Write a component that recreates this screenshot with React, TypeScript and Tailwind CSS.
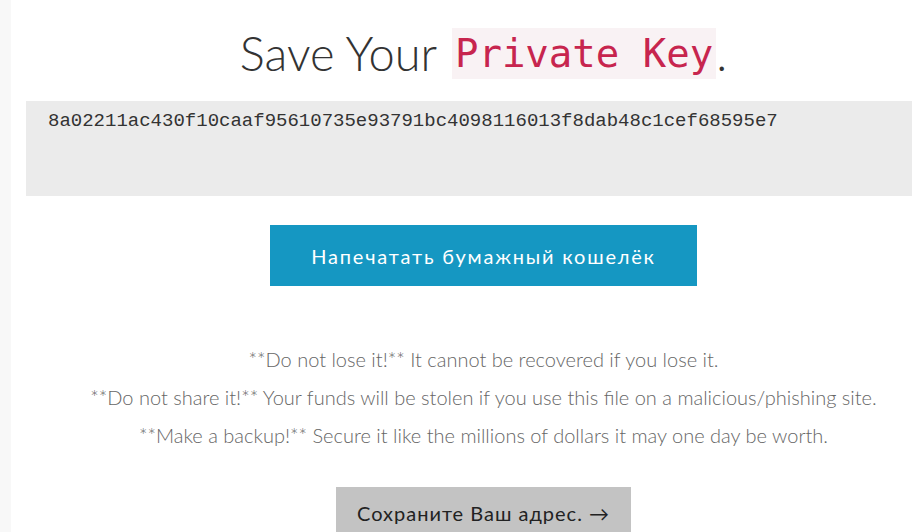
export default function App() {
  return (
    <div className="flex h-[532px] w-[912px] overflow-hidden bg-white font-['Lato','Noto_Sans',sans-serif] text-[#333]">
      <div className="w-[11px] shrink-0 bg-[#f8f8f8]" />
      <main className="ml-[15px] flex w-[915px] shrink-0 flex-col items-center">
        <h1 className="mt-[27px] flex shrink-0 items-center text-[47px] font-light leading-[52px] text-[#333]">
          <span>Save Your&nbsp;</span>
          <code className="ml-[3px] bg-[#f9f2f4] px-[3px] font-['DejaVu_Sans_Mono',monospace] text-[39px] leading-[51px] text-[#c7254e]">
            Private Key
          </code>
          <span>.</span>
        </h1>

        <div className="mt-[22px] h-[95px] w-full shrink-0 bg-[#ebebeb] pl-[22px] pt-[8px] font-['Liberation_Mono',monospace] text-[19px] leading-6 text-[#333]">
          8a02211ac430f10caaf95610735e93791bc4098116013f8dab48c1cef68595e7
        </div>

        <button className="mt-[29px] h-[61px] w-[427px] shrink-0 bg-[#1597c2] text-[20px] tracking-[1.8px] text-white">
          Напечатать бумажный кошелёк
        </button>

        <div className="mt-[61px] flex shrink-0 flex-col items-center gap-[14px] text-[20px] font-light leading-[24px] text-[#666]">
          <p>**Do not lose it!** It cannot be recovered if you lose it.</p>
          <p>**Do not share it!** Your funds will be stolen if you use this file on a malicious/phishing site.</p>
          <p>**Make a backup!** Secure it like the millions of dollars it may one day be worth.</p>
        </div>

        <button className="mt-[40px] h-[52px] w-[295px] shrink-0 bg-[#c3c3c3] text-[20px] tracking-[1px] text-[#222]">
          Сохраните Ваш адрес. →
        </button>
      </main>
    </div>
  );
}
